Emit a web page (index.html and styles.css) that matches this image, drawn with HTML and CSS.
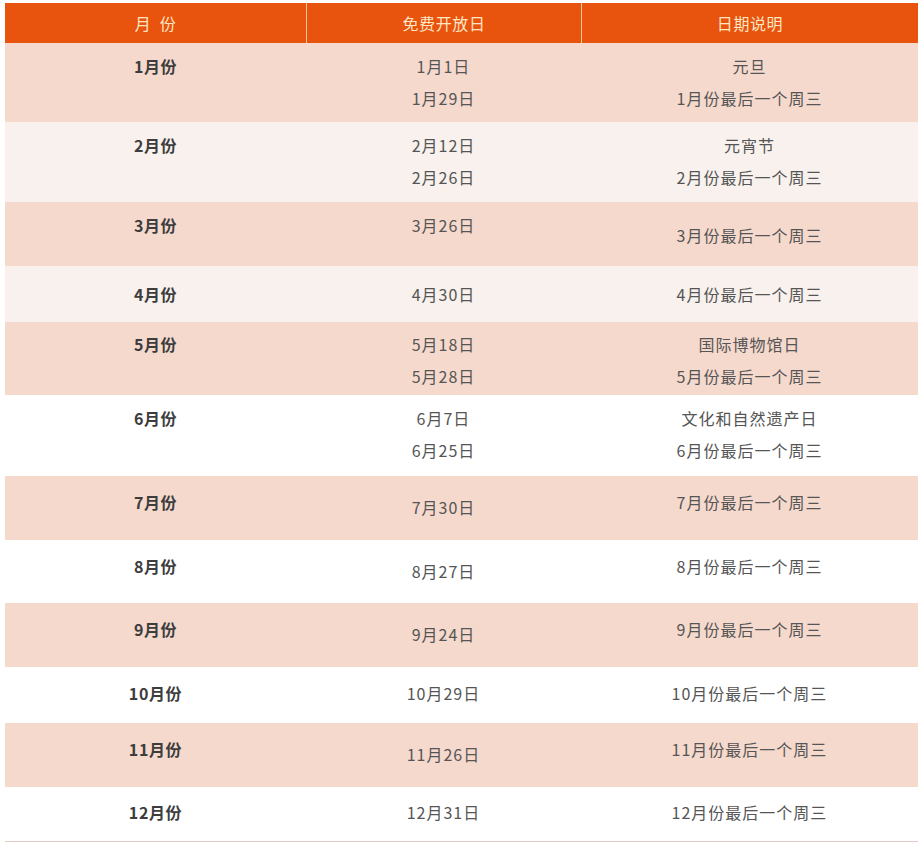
FILE: index.html
```html
<!DOCTYPE html>
<html lang="zh-CN">
<head>
<meta charset="utf-8">
<title>免费开放日</title>
<link rel="stylesheet" href="styles.css">
</head>
<body>
<div class="table">
  <div class="row head">
    <div class="cell">月&nbsp;&nbsp;份</div>
    <div class="cell">免费开放日</div>
    <div class="cell">日期说明</div>
  </div>
  <div class="row pink h79">
    <div class="cell m p7">1月份</div>
    <div class="cell p7"><p>1月1日</p><p>1月29日</p></div>
    <div class="cell p7"><p>元旦</p><p>1月份最后一个周三</p></div>
  </div>
  <div class="row light h80">
    <div class="cell m p7">2月份</div>
    <div class="cell p7"><p>2月12日</p><p>2月26日</p></div>
    <div class="cell p7"><p>元宵节</p><p>2月份最后一个周三</p></div>
  </div>
  <div class="row pink h64">
    <div class="cell m p7">3月份</div>
    <div class="cell p7">3月26日</div>
    <div class="cell p17">3月份最后一个周三</div>
  </div>
  <div class="row light h56">
    <div class="cell m p12">4月份</div>
    <div class="cell p12">4月30日</div>
    <div class="cell p12">4月份最后一个周三</div>
  </div>
  <div class="row pink h73">
    <div class="cell m p6">5月份</div>
    <div class="cell p6"><p>5月18日</p><p>5月28日</p></div>
    <div class="cell p6"><p>国际博物馆日</p><p>5月份最后一个周三</p></div>
  </div>
  <div class="row white h81">
    <div class="cell m p7">6月份</div>
    <div class="cell p7"><p>6月7日</p><p>6月25日</p></div>
    <div class="cell p7"><p>文化和自然遗产日</p><p>6月份最后一个周三</p></div>
  </div>
  <div class="row pink h64">
    <div class="cell m p10">7月份</div>
    <div class="cell p15">7月30日</div>
    <div class="cell p10">7月份最后一个周三</div>
  </div>
  <div class="row white h63">
    <div class="cell m p10">8月份</div>
    <div class="cell p15">8月27日</div>
    <div class="cell p10">8月份最后一个周三</div>
  </div>
  <div class="row pink h64">
    <div class="cell m p10">9月份</div>
    <div class="cell p15">9月24日</div>
    <div class="cell p10">9月份最后一个周三</div>
  </div>
  <div class="row white h56">
    <div class="cell m p10">10月份</div>
    <div class="cell p10">10月29日</div>
    <div class="cell p10">10月份最后一个周三</div>
  </div>
  <div class="row pink h64">
    <div class="cell m p10">11月份</div>
    <div class="cell p15">11月26日</div>
    <div class="cell p10">11月份最后一个周三</div>
  </div>
  <div class="row white h55 last">
    <div class="cell m p9">12月份</div>
    <div class="cell p9">12月31日</div>
    <div class="cell p9">12月份最后一个周三</div>
  </div>
</div>
</body>
</html>
```
FILE: styles.css
```css
html, body {
  margin: 0;
  padding: 0;
  background: #ffffff;
}
body {
  font-family: "Noto Sans CJK SC", "Noto Sans", sans-serif;
  font-size: 16px;
  color: #555555;
}
.table {
  margin: 3px 6px 0 5px;
  width: 913px;
}
.row {
  display: grid;
  grid-template-columns: 301px 275px 337px;
  box-sizing: border-box;
}
.cell {
  text-align: center;
  line-height: 32px;
  letter-spacing: 1px;
  box-sizing: border-box;
}
.cell p {
  margin: 0;
}
.head {
  background: #e8530e;
  height: 40px;
}
.head .cell {
  color: #fde6c3;
  line-height: 40px;
  font-size: 16px;
  letter-spacing: 0.6px;
}
.head .cell + .cell {
  border-left: 1px solid #f3c996;
}
.m {
  font-weight: bold;
  color: #3d3d3d;
  letter-spacing: 0.6px;
}
.pink { background: #f5d9cd; }
.light { background: #f8f1ed; }
.white { background: #ffffff; }
.last { border-bottom: 1px solid #e3cbc3; }

.h55 { height: 55px; }
.h56 { height: 56px; }
.h63 { height: 63px; }
.h64 { height: 64px; }
.h73 { height: 73px; }
.h79 { height: 79px; }
.h80 { height: 80px; }
.h81 { height: 81px; }

.p6 { padding-top: 6px; }
.p7 { padding-top: 7px; }
.p9 { padding-top: 9px; }
.p10 { padding-top: 10px; }
.p12 { padding-top: 12px; }
.p15 { padding-top: 15px; }
.p17 { padding-top: 17px; }
```
